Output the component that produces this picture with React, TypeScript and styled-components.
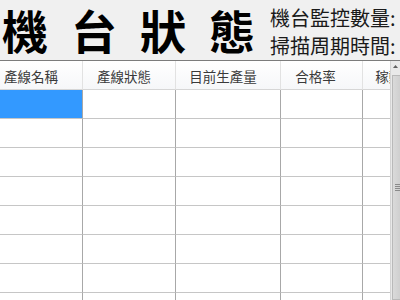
import React from "react";
import styled, { createGlobalStyle } from "styled-components";

const GlobalStyle = createGlobalStyle`
  html, body {
    margin: 0;
    padding: 0;
    background: #f0f0f0;
    overflow: hidden;
  }
  body {
    font-family: "Noto Sans CJK TC", "Noto Sans", sans-serif;
  }
`;

const columns = [
  { title: "產線名稱", width: 83, shift: 20 },
  { title: "產線狀態", width: 93, shift: 10 },
  { title: "目前生產量", width: 105, shift: 10 },
  { title: "合格率", width: 82, shift: 12 },
  { title: "稼動率", width: 82, shift: 16 },
];

const rowCount = 8;

const Page = styled.div`
  width: 400px;
  height: 300px;
  display: flex;
  flex-direction: column;
  background: #f0f0f0;
  overflow: hidden;
`;

const TopBar = styled.div`
  height: 60px;
  flex-shrink: 0;
  display: flex;
  align-items: center;
  white-space: nowrap;
`;

const Title = styled.h1`
  margin: 0 0 0 2px;
  display: flex;
  gap: 23px;
  font-size: 46px;
  font-weight: 700;
  line-height: 1.25;
  color: #000;
  flex-shrink: 0;
`;

const TitleChar = styled.span`
  display: block;
  width: 46px;
  text-align: center;
`;

const InfoList = styled.div`
  display: flex;
  flex-direction: column;
  margin: 4px 0 0 15px;
`;

const InfoLine = styled.div`
  font-size: 20px;
  line-height: 28px;
  color: #1a1a1a;
`;

const GridArea = styled.div`
  flex: 1;
  display: flex;
  border-top: 1px solid #7c7c7c;
  background: #fff;
  overflow: hidden;
`;

const Viewport = styled.div`
  flex: 1;
  overflow: hidden;
`;

const Row = styled.div`
  display: flex;
  width: max-content;
`;

const HeaderCell = styled.div<{ $w: number; $shift: number }>`
  box-sizing: border-box;
  width: ${(p) => p.$w}px;
  height: 29px;
  padding-right: ${(p) => p.$shift}px;
  padding-top: 2px;
  display: flex;
  align-items: center;
  justify-content: center;
  font-size: 13.5px;
  color: #3a3a3a;
  background: linear-gradient(#ffffff, #f6f7f9);
  border-right: 1px solid #e2e2e2;
  border-bottom: 1px solid #d6d6d6;
  white-space: nowrap;
`;

const Cell = styled.div<{ $w: number; $selected?: boolean }>`
  box-sizing: border-box;
  width: ${(p) => p.$w}px;
  height: 29px;
  background: ${(p) => (p.$selected ? "#3399ff" : "#fff")};
  border-right: 1px solid #a8a8a8;
  border-bottom: 1px solid #c6c6c6;
`;

const Scrollbar = styled.div`
  width: 9px;
  flex-shrink: 0;
  display: flex;
  flex-direction: column;
  background: #e9e9e9;
  border-left: 1px solid #d4d4d4;
`;

const ArrowButton = styled.div`
  height: 16px;
  display: flex;
  align-items: center;
  padding-left: 2px;
`;

const Thumb = styled.div`
  height: 300px;
  margin-top: 2px;
  margin-left: 1px;
  background: linear-gradient(90deg, #dadada, #cfcfcf);
  border: 1px solid #b9b9b9;
  border-right: none;
  display: flex;
  align-items: center;
  padding-left: 2px;
`;

const Grip = styled.div`
  width: 5px;
  height: 7px;
  background: repeating-linear-gradient(#8a8a8a 0 1px, transparent 1px 2px);
`;

export default function App() {
  return (
    <>
      <GlobalStyle />
      <Page>
        <TopBar>
          <Title>
            {"機台狀態".split("").map((ch) => (
              <TitleChar key={ch}>{ch}</TitleChar>
            ))}
          </Title>
          <InfoList>
            <InfoLine>機台監控數量:</InfoLine>
            <InfoLine>掃描周期時間:</InfoLine>
          </InfoList>
        </TopBar>
        <GridArea>
          <Viewport>
            <Row>
              {columns.map((c) => (
                <HeaderCell key={c.title} $w={c.width} $shift={c.shift}>
                  {c.title}
                </HeaderCell>
              ))}
            </Row>
            {Array.from({ length: rowCount }).map((_, r) => (
              <Row key={r}>
                {columns.map((c, i) => (
                  <Cell key={c.title} $w={c.width} $selected={r === 0 && i === 0} />
                ))}
              </Row>
            ))}
          </Viewport>
          <Scrollbar>
            <ArrowButton>
              <svg width="5" height="3" viewBox="0 0 5 3">
                <path d="M0 3 L2.5 0 L5 3 Z" fill="#606060" />
              </svg>
            </ArrowButton>
            <Thumb>
              <Grip />
            </Thumb>
          </Scrollbar>
        </GridArea>
      </Page>
    </>
  );
}
